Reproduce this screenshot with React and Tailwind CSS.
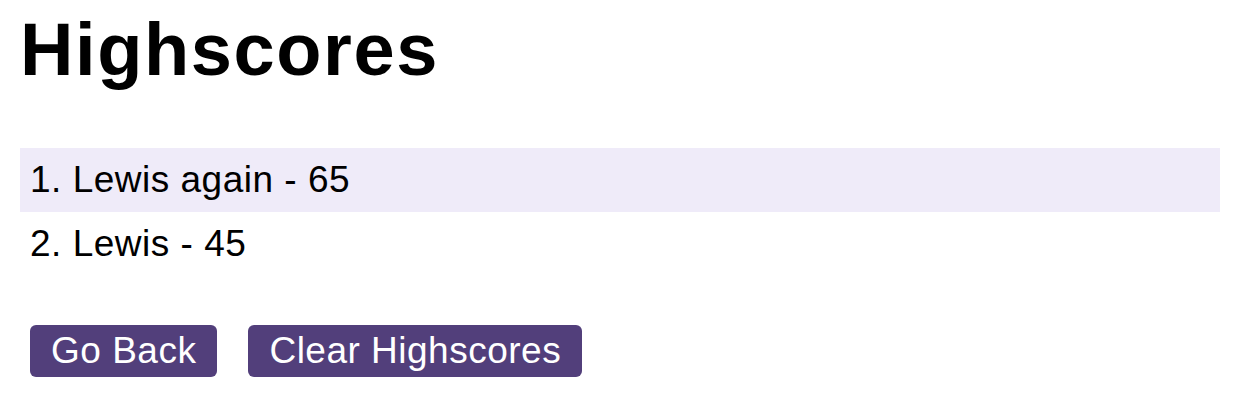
export default function App() {
  const scores = [
    { name: 'Lewis again', score: 65 },
    { name: 'Lewis', score: 45 },
  ]

  return (
    <div className="min-h-[408px] bg-white pl-[20px] pr-[30px] pt-[13px] text-black font-['Liberation_Sans',Arial,sans-serif]">
      <h1 className="text-[74px] font-bold leading-none tracking-[1.6px]">Highscores</h1>

      <ol className="mt-[61px]">
        {scores.map((s, i) => (
          <li
            key={i}
            className={`h-[64px] pl-[10px] text-[37px] leading-[64px] tracking-[0.5px] ${i === 0 ? 'bg-[#efebf9]' : ''}`}
          >
            {i + 1}. {s.name} - {s.score}
          </li>
        ))}
      </ol>

      <div className="mt-[49px] ml-[10px] flex gap-[31px]">
        <button className="h-[52px] rounded-[6px] bg-[#523f7b] px-[21px] text-[37px] leading-[52px] tracking-[0.5px] text-white">
          Go Back
        </button>
        <button className="h-[52px] rounded-[6px] bg-[#523f7b] px-[21px] text-[37px] leading-[52px] tracking-[0.5px] text-white">
          Clear Highscores
        </button>
      </div>
    </div>
  )
}
